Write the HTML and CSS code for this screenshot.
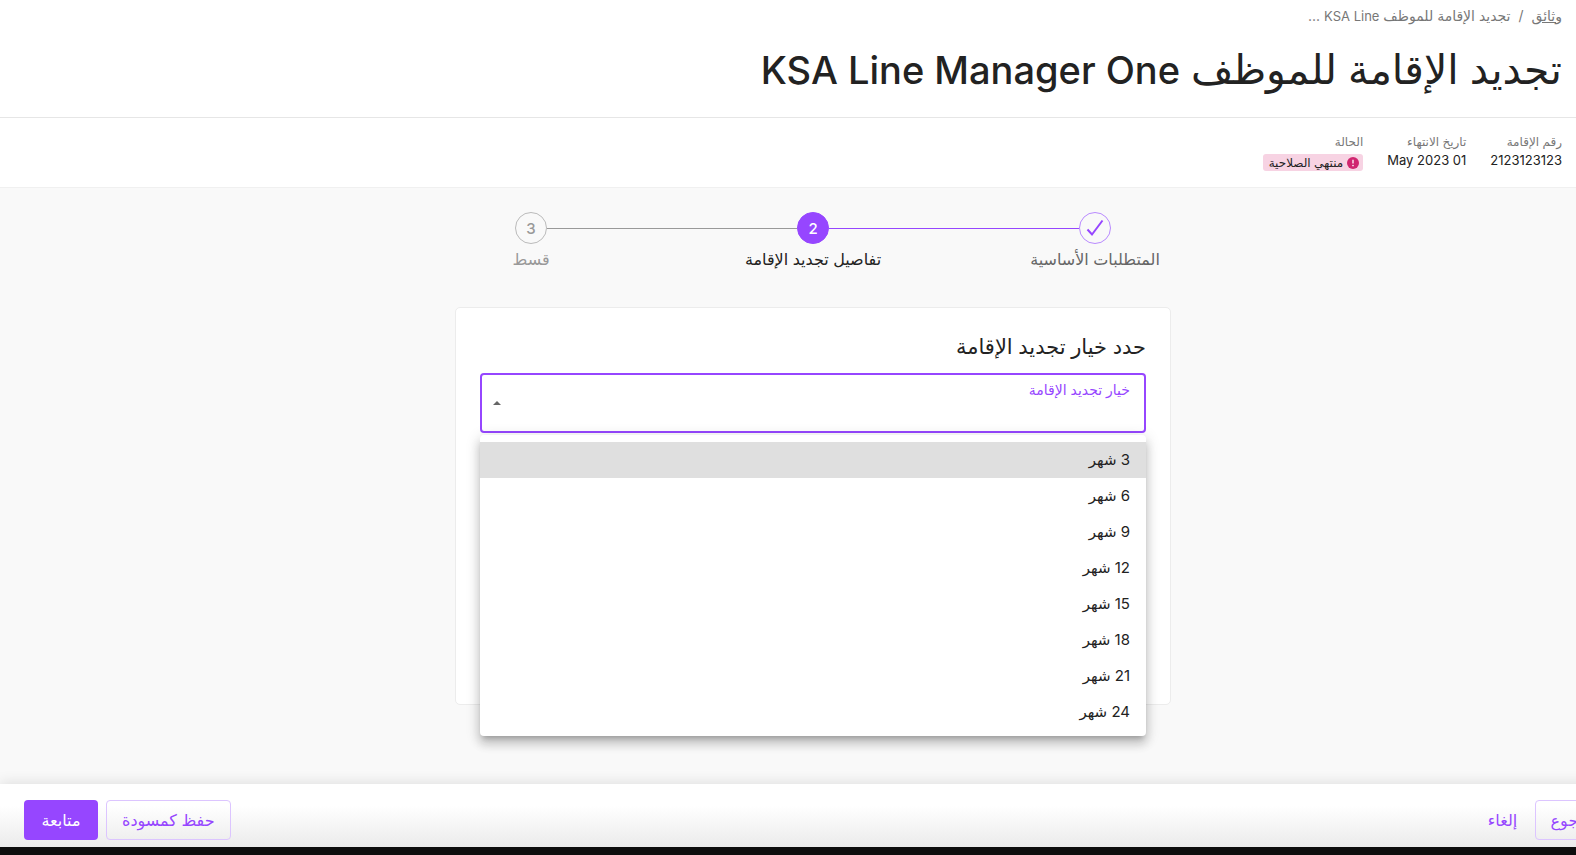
FILE: index.html
```html
<!DOCTYPE html>
<html lang="ar" dir="rtl">

<head>
    <meta charset="UTF-8">
    <title>تجديد الإقامة</title>
    <link rel="stylesheet" href="styles.css">
</head>

<body>
    <header class="header">
        <nav class="breadcrumb">
            <a href="#">وثائق</a>
            <span>/</span>
            <span>تجديد الإقامة للموظف <bdi class="latin">KSA Line</bdi> ...</span>
        </nav>
        <h1 class="title">تجديد الإقامة للموظف <bdi class="latin">KSA Line Manager One</bdi></h1>
    </header>

    <dl class="summary">
        <div>
            <dt>رقم الإقامة</dt>
            <dd>2123123123</dd>
        </div>
        <div>
            <dt>تاريخ الانتهاء</dt>
            <dd>01 May 2023</dd>
        </div>
        <div>
            <dt>الحالة</dt>
            <dd class="badge">
                <svg width="12" height="12" viewBox="0 0 12 12">
                    <circle cx="6" cy="6" r="6" fill="#d02670" />
                    <path d="M6 2.8v3.6" stroke="#fff" stroke-width="1.3" />
                    <circle cx="6" cy="8.6" r=".8" fill="#fff" />
                </svg>
                <span>منتهي الصلاحية</span>
            </dd>
        </div>
    </dl>

    <main class="main">
        <ol class="stepper">
            <li class="step done">
                <span class="circle">
                    <svg width="20" height="20" viewBox="0 0 20 20">
                        <path d="M2.5 11.5l4.5 5L17.5 2.5" fill="none" stroke="#9646ff" stroke-width="2" />
                    </svg>
                </span>
                <span class="step-label">المتطلبات الأساسية</span>
            </li>
            <li class="step active">
                <span class="circle">2</span>
                <span class="step-label">تفاصيل تجديد الإقامة</span>
            </li>
            <li class="step">
                <span class="circle">3</span>
                <span class="step-label">قسط</span>
            </li>
        </ol>

        <section class="card">
            <h2>حدد خيار تجديد الإقامة</h2>
            <div class="field">
                <label for="period">خيار تجديد الإقامة</label>
                <select id="period">
                    <option value=""></option>
                </select>
                <svg class="arrow" width="10" height="5" viewBox="0 0 10 5">
                    <path d="M1 5l4-4 4 4z" fill="#666" />
                </svg>
                <ul class="menu" role="listbox" aria-label="خيار تجديد الإقامة">
                    <li class="selected" role="option">3 شهر</li>
                    <li role="option">6 شهر</li>
                    <li role="option">9 شهر</li>
                    <li role="option">12 شهر</li>
                    <li role="option">15 شهر</li>
                    <li role="option">18 شهر</li>
                    <li role="option">21 شهر</li>
                    <li role="option">24 شهر</li>
                </ul>
            </div>
        </section>
    </main>

    <footer class="footer">
        <div class="back">
            <button class="btn outline" type="button">رجوع</button>
            <button class="btn" type="button">إلغاء</button>
        </div>
        <div class="next">
            <button class="btn outline" type="button">حفظ كمسودة</button>
            <button class="btn primary" type="button">متابعة</button>
        </div>
    </footer>
    <div class="strip"></div>
</body>

</html>
```
FILE: styles.css
```css
* {
    box-sizing: border-box;
}

body {
    margin: 0;
    min-height: 100vh;
    display: flex;
    flex-direction: column;
    overflow: hidden;
    font-family: Inter, "DejaVu Sans", sans-serif;
    font-size: 16px;
    color: #222;
    background: #f9f9f9;
}

h1,
h2,
ol,
ul,
dl,
dd {
    margin: 0;
    padding: 0;
    list-style: none;
}

/* header */

.header {
    height: 118px;
    padding: 4px 14px 0;
    background: #fff;
    border-bottom: 1px solid #e6e6e6;
}

.breadcrumb {
    display: flex;
    gap: 8px;
    font-size: 14px;
    line-height: 24px;
    color: #777;
}

.breadcrumb a {
    color: #777;
}

.breadcrumb .latin {
    font-size: 13px;
}

.title {
    margin-top: 13px;
    font-size: 41px;
    font-weight: 500;
    line-height: 56px;
}

.title .latin {
    font-size: 38px;
}

.summary {
    display: flex;
    gap: 24px;
    height: 70px;
    padding: 16px 14px 0;
    background: #fff;
    border-bottom: 1px solid #f0f0f0;
}

.summary dt {
    font-size: 12px;
    line-height: 16px;
    color: #777;
}

.summary dd {
    font-size: 13px;
    line-height: 20px;
}

.summary .badge {
    display: flex;
    align-items: center;
    gap: 4px;
    height: 17px;
    margin-top: 4px;
    padding: 0 4px 0 6px;
    border-radius: 3px;
    font-size: 12px;
    background: #f7d3e3;
}

/* content and footer run past the right edge of the window */

.main,
.footer {
    margin-right: -50px;
}

.main {
    flex: 1;
    padding: 24px 24px 78px;
}

.stepper {
    display: grid;
    grid-template-columns: repeat(3, 1fr);
    max-width: 846px;
    margin: 0 auto;
}

.step {
    position: relative;
    display: flex;
    flex-direction: column;
    align-items: center;
    color: #999;
}

/* line to the previous step */
.step + .step::before {
    content: "";
    position: absolute;
    top: 16px;
    right: calc(16px - 50%);
    width: calc(100% - 32px);
    height: 1px;
    background: #999;
}

.step + .active::before {
    background: #9646ff;
}

.circle {
    display: flex;
    align-items: center;
    justify-content: center;
    width: 32px;
    height: 32px;
    border: 1px solid #bbb;
    border-radius: 50%;
    font-size: 15px;
    font-weight: 500;
}

.step-label {
    font-size: 16px;
    line-height: 30px;
}

.done {
    color: #666;
}

.done .circle {
    border-color: #b98aff;
}

.active {
    color: #222;
}

.active .circle {
    color: #fff;
    border-color: #9646ff;
    background: #9646ff;
}

.card {
    max-width: 716px;
    min-height: 398px;
    margin: 33px auto 0;
    padding: 24px;
    border: 1px solid #ececec;
    border-radius: 5px;
    background: #fff;
}

.card h2 {
    margin-bottom: 11px;
    font-size: 21px;
    font-weight: 500;
    line-height: 30px;
}

.field {
    position: relative;
}

.field select {
    display: block;
    width: 100%;
    height: 60px;
    padding: 24px 16px 0;
    border: 2px solid #9646ff;
    border-radius: 4px;
    font: inherit;
    background: #fff;
    appearance: none;
    outline: none;
}

.field label {
    position: absolute;
    top: 7px;
    right: 16px;
    font-size: 14px;
    line-height: 20px;
    color: #9646ff;
}

.arrow {
    position: absolute;
    top: 27px;
    left: 12px;
}

.menu {
    position: absolute;
    top: 62px;
    right: 0;
    left: 0;
    padding: 7px 0 6px;
    border-radius: 4px;
    background: #fff;
    box-shadow: 0 5px 5px -3px rgba(0, 0, 0, .2), 0 8px 10px 1px rgba(0, 0, 0, .14), 0 3px 14px 2px rgba(0, 0, 0, .12);
}

.menu li {
    padding: 0 16px;
    font-size: 15px;
    line-height: 36px;
}

.menu .selected {
    background: #dfdfdf;
}

/* footer */

.footer {
    display: flex;
    justify-content: space-between;
    padding: 16px 24px 7px;
    background: linear-gradient(#fff 35%, #ebebeb);
    box-shadow: 0 -2px 12px rgba(0, 0, 0, .1);
}

.back,
.next {
    display: flex;
}

.next {
    gap: 8px;
}

.btn {
    min-width: 64px;
    height: 40px;
    padding: 0 15px;
    border: 1px solid transparent;
    border-radius: 4px;
    font: inherit;
    color: #9646ff;
    background: transparent;
}

.outline {
    border-color: #dcc5ff;
}

.primary {
    min-width: 74px;
    color: #fff;
    background: #9646ff;
}

.strip {
    height: 8px;
    background: #0d0d0d;
}
```
